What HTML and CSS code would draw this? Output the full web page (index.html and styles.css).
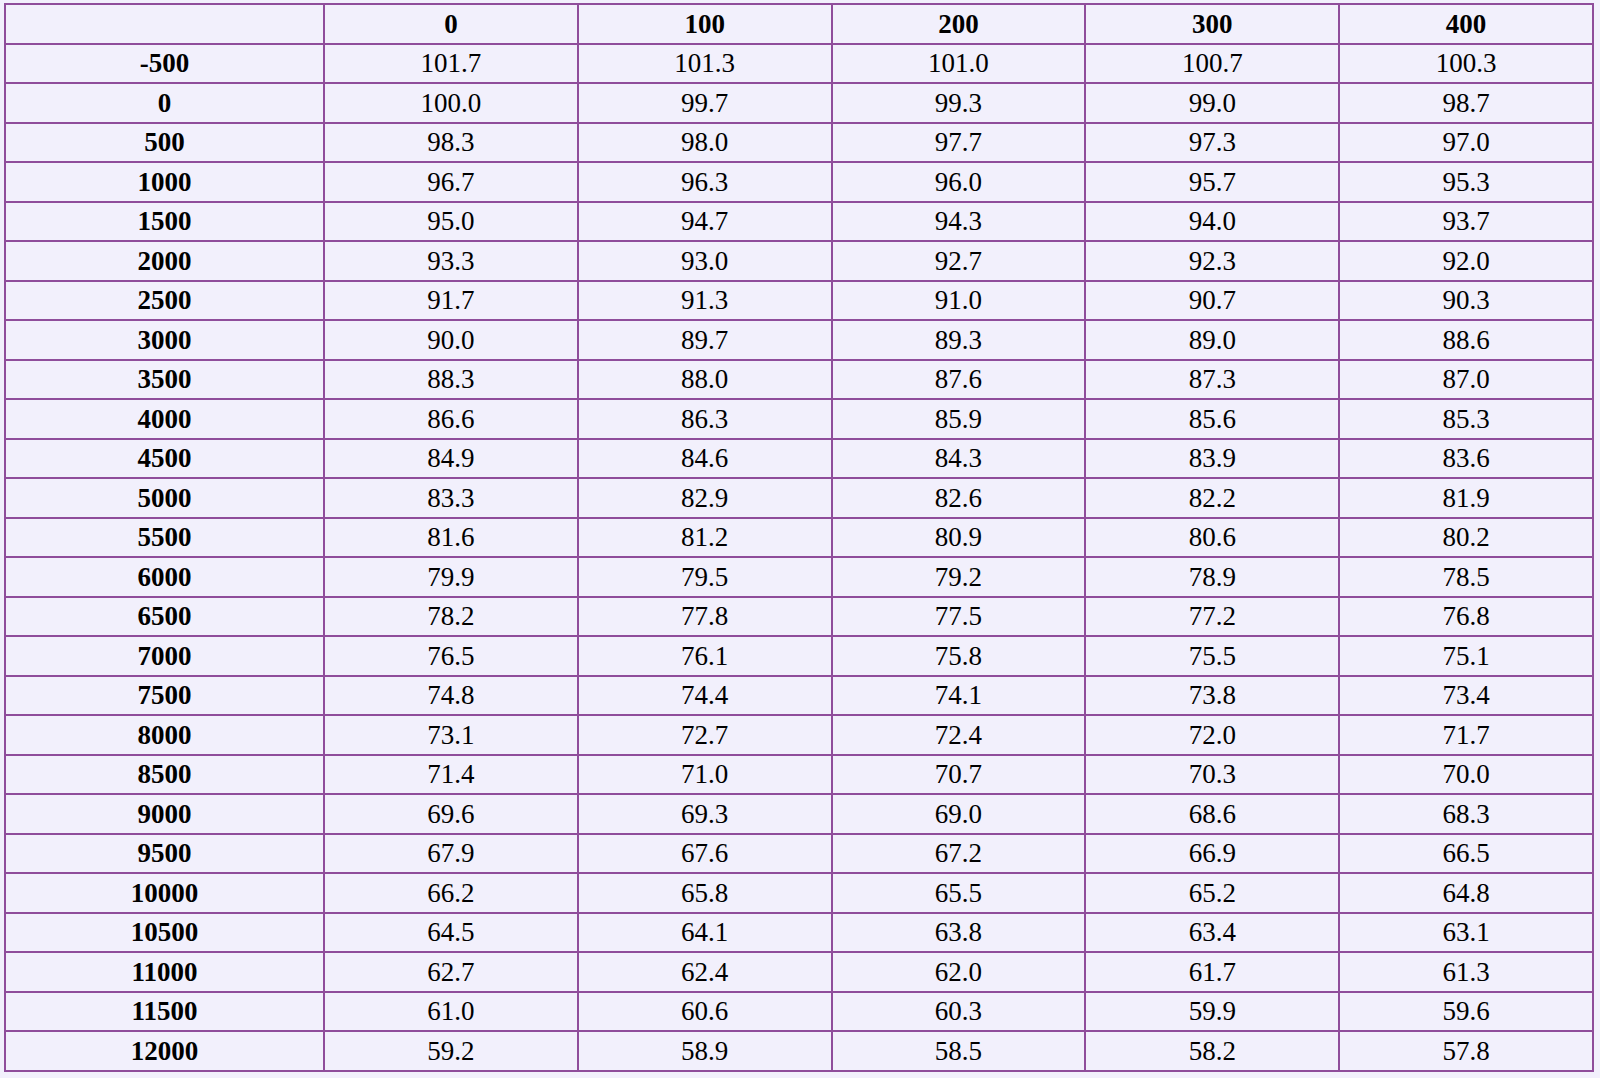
FILE: index.html
```html
<!DOCTYPE html>
<html>
<head>
<meta charset="utf-8">
<link rel="stylesheet" href="styles.css">
</head>
<body>
<table class="grid">
<colgroup><col class="c-head"><col><col><col><col><col></colgroup>
<thead>
<tr><th></th><th>0</th><th>100</th><th>200</th><th>300</th><th>400</th></tr>
</thead>
<tbody>
<tr><th>-500</th><td>101.7</td><td>101.3</td><td>101.0</td><td>100.7</td><td>100.3</td></tr>
<tr><th>0</th><td>100.0</td><td>99.7</td><td>99.3</td><td>99.0</td><td>98.7</td></tr>
<tr><th>500</th><td>98.3</td><td>98.0</td><td>97.7</td><td>97.3</td><td>97.0</td></tr>
<tr><th>1000</th><td>96.7</td><td>96.3</td><td>96.0</td><td>95.7</td><td>95.3</td></tr>
<tr><th>1500</th><td>95.0</td><td>94.7</td><td>94.3</td><td>94.0</td><td>93.7</td></tr>
<tr><th>2000</th><td>93.3</td><td>93.0</td><td>92.7</td><td>92.3</td><td>92.0</td></tr>
<tr><th>2500</th><td>91.7</td><td>91.3</td><td>91.0</td><td>90.7</td><td>90.3</td></tr>
<tr><th>3000</th><td>90.0</td><td>89.7</td><td>89.3</td><td>89.0</td><td>88.6</td></tr>
<tr><th>3500</th><td>88.3</td><td>88.0</td><td>87.6</td><td>87.3</td><td>87.0</td></tr>
<tr><th>4000</th><td>86.6</td><td>86.3</td><td>85.9</td><td>85.6</td><td>85.3</td></tr>
<tr><th>4500</th><td>84.9</td><td>84.6</td><td>84.3</td><td>83.9</td><td>83.6</td></tr>
<tr><th>5000</th><td>83.3</td><td>82.9</td><td>82.6</td><td>82.2</td><td>81.9</td></tr>
<tr><th>5500</th><td>81.6</td><td>81.2</td><td>80.9</td><td>80.6</td><td>80.2</td></tr>
<tr><th>6000</th><td>79.9</td><td>79.5</td><td>79.2</td><td>78.9</td><td>78.5</td></tr>
<tr><th>6500</th><td>78.2</td><td>77.8</td><td>77.5</td><td>77.2</td><td>76.8</td></tr>
<tr><th>7000</th><td>76.5</td><td>76.1</td><td>75.8</td><td>75.5</td><td>75.1</td></tr>
<tr><th>7500</th><td>74.8</td><td>74.4</td><td>74.1</td><td>73.8</td><td>73.4</td></tr>
<tr><th>8000</th><td>73.1</td><td>72.7</td><td>72.4</td><td>72.0</td><td>71.7</td></tr>
<tr><th>8500</th><td>71.4</td><td>71.0</td><td>70.7</td><td>70.3</td><td>70.0</td></tr>
<tr><th>9000</th><td>69.6</td><td>69.3</td><td>69.0</td><td>68.6</td><td>68.3</td></tr>
<tr><th>9500</th><td>67.9</td><td>67.6</td><td>67.2</td><td>66.9</td><td>66.5</td></tr>
<tr><th>10000</th><td>66.2</td><td>65.8</td><td>65.5</td><td>65.2</td><td>64.8</td></tr>
<tr><th>10500</th><td>64.5</td><td>64.1</td><td>63.8</td><td>63.4</td><td>63.1</td></tr>
<tr><th>11000</th><td>62.7</td><td>62.4</td><td>62.0</td><td>61.7</td><td>61.3</td></tr>
<tr><th>11500</th><td>61.0</td><td>60.6</td><td>60.3</td><td>59.9</td><td>59.6</td></tr>
<tr><th>12000</th><td>59.2</td><td>58.9</td><td>58.5</td><td>58.2</td><td>57.8</td></tr>
</tbody>
</table>
</body>
</html>
```
FILE: styles.css
```css
html, body {
  margin: 0;
  background: #f2f0fc;
}
body {
  padding: 3px 0 0 4px;
  font-family: "Liberation Serif", "Times New Roman", serif;
  color: #000;
}
.grid {
  border-collapse: collapse;
  table-layout: fixed;
  width: 1590px;
  border: 2px solid #8f4d9b;
  background: #f2f0fc;
}
.c-head {
  width: 319px;
}
.grid tr {
  height: 39.5px;
}
.grid th,
.grid td {
  border: 2px solid #8f4d9b;
  padding: 1px 0 0;
  text-align: center;
  vertical-align: middle;
  font-size: 27px;
  line-height: 1;
}
.grid th {
  font-weight: bold;
}
.grid td {
  font-weight: normal;
}
```
